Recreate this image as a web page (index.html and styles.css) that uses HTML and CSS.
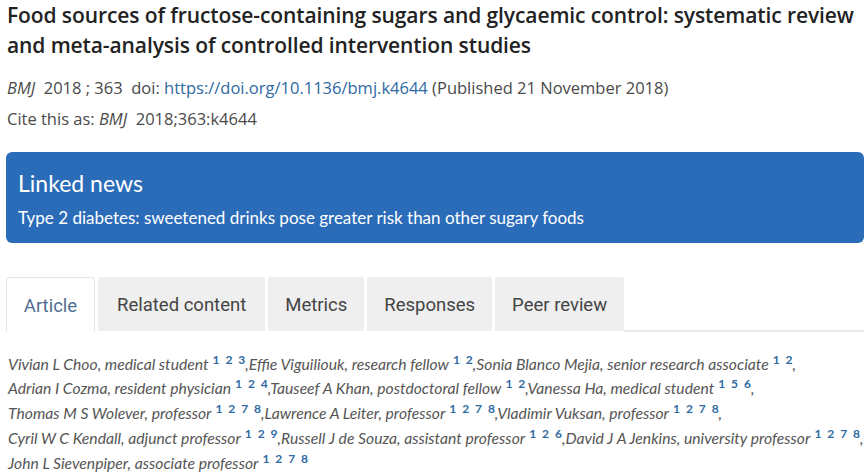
FILE: index.html
```html
<!DOCTYPE html>
<html>
<head>
<meta charset="utf-8">
<link rel="stylesheet" href="styles.css">
</head>
<body>
<div class="page">
  <h1 class="title">Food sources of fructose-containing sugars and glycaemic control: systematic review and meta-analysis of controlled intervention studies</h1>
  <p class="meta"><em>BMJ</em>&nbsp; 2018 ; 363&nbsp; doi: <a class="doi" href="#">https://doi.org/10.1136/bmj.k4644</a> (Published 21 November 2018)</p>
  <p class="cite">Cite this as: <em>BMJ</em>&nbsp; 2018;363:k4644</p>
  <div class="news">
    <div class="news-title">Linked news</div>
    <div class="news-link">Type 2 diabetes: sweetened drinks pose greater risk than other sugary foods</div>
  </div>
  <div class="tabs">
    <div class="tab active">Article</div>
    <div class="tab">Related content</div>
    <div class="tab">Metrics</div>
    <div class="tab">Responses</div>
    <div class="tab">Peer review</div>
    <div class="tab-fill"></div>
  </div>
  <div class="authors">
    <div class="aline">Vivian L Choo, medical student<sup>1 2 3</sup>,Effie Viguiliouk, research fellow<sup>1 2</sup>,Sonia Blanco Mejia, senior research associate<sup>1 2</sup>,</div>
    <div class="aline">Adrian I Cozma, resident physician<sup>1 2 4</sup>,Tauseef A Khan, postdoctoral fellow<sup>1 2</sup>,Vanessa Ha, medical student<sup>1 5 6</sup>,</div>
    <div class="aline">Thomas M S Wolever, professor<sup>1 2 7 8</sup>,Lawrence A Leiter, professor<sup>1 2 7 8</sup>,Vladimir Vuksan, professor<sup>1 2 7 8</sup>,</div>
    <div class="aline">Cyril W C Kendall, adjunct professor<sup>1 2 9</sup>,Russell J de Souza, assistant professor<sup>1 2 6</sup>,David J A Jenkins, university professor<sup>1 2 7 8</sup>,</div>
    <div class="aline">John L Sievenpiper, associate professor<sup>1 2 7 8</sup></div>
  </div>
</div>
</body>
</html>
```
FILE: styles.css
```css
html, body { margin: 0; padding: 0; background: #fff; }
.page { padding: 0 0 0 6px; color: #333; }
.title {
  font-family: "Open Sans", sans-serif;
  font-weight: 600;
  font-size: 21px;
  line-height: 30px;
  color: #222;
  margin: 0;
  padding: 0 0 0 1px;
  letter-spacing: -0.1px;
}
.meta, .cite {
  font-family: "Open Sans", sans-serif;
  font-size: 16.5px;
  color: #4a4a4a;
  margin: 0;
  padding-left: 1px;
  line-height: 31px;
}
.meta { margin-top: 12px; }
.doi { color: #2f6aa3; text-decoration: none; }
.news {
  margin-top: 18px;
  background: #2b6cb8;
  border-radius: 6px;
  height: 91px;
  box-sizing: border-box;
  padding: 16px 12px 0 12px;
  color: #fff;
  font-family: Lato, sans-serif;
}
.news-title { font-size: 23px; line-height: 30px; }
.news-link { font-size: 17px; line-height: 20px; margin-top: 10px; }
.tabs {
  display: flex;
  gap: 3px;
  margin-top: 34px;
  height: 55px;
  font-family: Roboto, sans-serif;
}
.tab {
  background: #efefef;
  font-size: 18.5px;
  color: #444;
  padding: 2px 18px 0;
  display: flex;
  align-items: center;
  border-radius: 3px 3px 0 0;
  height: 54px;
  box-sizing: border-box;
}
.tab:nth-child(2) { padding: 2px 19px 0; }
.tab:nth-child(3) { padding: 2px 17px 0; }
.tab:nth-child(4) { padding: 2px 17px 0; }
.tab:nth-child(5) { padding: 2px 17px 0; }
.tab.active {
  background: #fff;
  border: 1px solid #e4e4e4;
  border-bottom: none;
  color: #4f6d92;
  height: 55px;
  width: 89px;
  justify-content: center;
  padding: 2px 0 0;
}
.tab-fill { flex: 1; border-bottom: 2px solid #e8e8e8; margin-left: -3px; }
.authors {
  font-family: Lato, sans-serif;
  font-style: italic;
  font-size: 15.7px;
  line-height: 24.8px;
  color: #555;
  margin: 19.5px 0 0 2px;
}
.aline { white-space: nowrap; }
.authors sup {
  font-style: normal;
  font-weight: 700;
  font-size: 12px;
  line-height: 0;
  color: #2f6aa3;
  vertical-align: 0;
  position: relative;
  top: -6px;
  word-spacing: 3px;
  margin-left: 4px;
}
```
